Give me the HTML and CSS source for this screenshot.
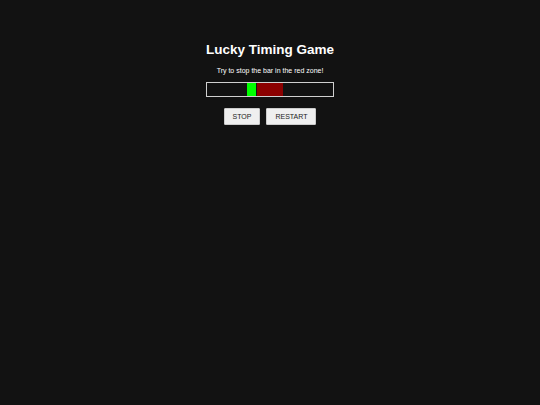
FILE: index.html
```html
<!DOCTYPE html>
<html>
<head>
<meta charset="utf-8">
<link rel="stylesheet" href="styles.css">
</head>
<body>
<div class="game">
  <h1 class="title">Lucky Timing Game</h1>
  <p class="hint">Try to stop the bar in the red zone!</p>
  <div class="bar">
    <div class="zone"></div>
    <div class="marker"></div>
  </div>
  <div class="controls">
    <button class="btn">STOP</button>
    <button class="btn">RESTART</button>
  </div>
</div>
</body>
</html>
```
FILE: styles.css
```css
html, body {
  margin: 0;
  padding: 0;
  background: #121212;
  height: 100%;
}
body {
  font-family: "Liberation Sans", Arial, sans-serif;
  color: #ffffff;
}
.game {
  display: flex;
  flex-direction: column;
  align-items: center;
  padding-top: 42px;
}
.title {
  margin: 0;
  font-size: 13.5px;
  font-weight: bold;
  line-height: 16px;
}
.hint {
  margin: 9px 0 0 0;
  font-size: 7px;
  line-height: 8px;
}
.bar {
  position: relative;
  margin-top: 6.5px;
  width: 126px;
  height: 13px;
  border: 1px solid #d0d0d0;
  background: #121212;
}
.zone {
  position: absolute;
  left: 50px;
  top: 0;
  width: 26px;
  height: 100%;
  background: #8b0000;
}
.marker {
  position: absolute;
  left: 40px;
  top: 0;
  width: 9px;
  height: 100%;
  background: #00ff00;
}
.controls {
  display: flex;
  gap: 6px;
  margin-top: 11px;
}
.btn {
  font-family: "Liberation Sans", Arial, sans-serif;
  font-size: 7px;
  height: 17px;
  padding: 0 8px;
  background: #efefef;
  color: #222;
  border: 1px solid #ccc;
  border-radius: 1px;
}
```
